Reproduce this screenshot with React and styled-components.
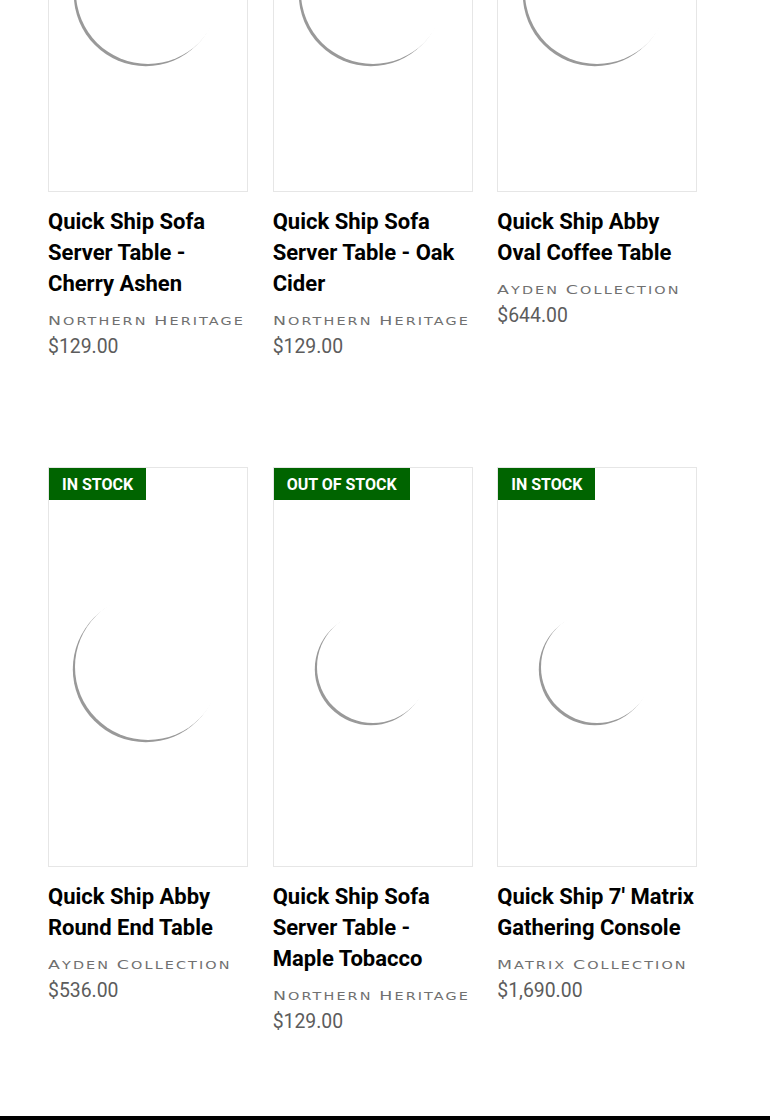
import React from 'react';
import styled, { createGlobalStyle } from 'styled-components';

const GlobalStyle = createGlobalStyle`
  html, body {
    margin: 0;
    padding: 0;
    background: #fff;
    font-family: Roboto, "Liberation Sans", sans-serif;
    overflow: hidden;
  }
`;

const Page = styled.div`
  width: 770px;
  height: 1120px;
  overflow: hidden;
  display: flex;
  flex-direction: column;
`;

const Grid = styled.div`
  display: grid;
  grid-template-columns: repeat(3, 200px);
  column-gap: 24.67px;
  row-gap: 107px;
  margin-top: -208px;
  padding: 0 0 80px 48px;
`;

const Card = styled.div`
  display: flex;
  flex-direction: column;
`;

const ImageBox = styled.div`
  position: relative;
  height: 400px;
  border: 1px solid #e6e6e6;
  box-sizing: border-box;
  display: flex;
  align-items: center;
  justify-content: center;
`;

const Spinner = styled.div`
  width: ${(p) => p.size}px;
  height: ${(p) => p.size}px;
  border-radius: 50%;
  box-shadow: -2.2px 2.2px 0.6px 0 #999;
`;

const Badge = styled.span`
  position: absolute;
  top: 0;
  left: 0;
  height: 32px;
  display: flex;
  align-items: center;
  padding: 0 13px;
  background: #006400;
  color: #fff;
  font-weight: 700;
  font-size: 16px;
  text-transform: uppercase;
`;

const Title = styled.h3`
  margin: 14px 0 0;
  font-size: 22px;
  line-height: 31px;
  font-weight: 700;
  color: #000;
`;

const Vendor = styled.div`
  margin-top: 12px;
  height: 20px;
  line-height: 20px;
  font-family: "DejaVu Sans", Verdana, sans-serif;
  font-size: 9.6px;
  letter-spacing: 1.4px;
  text-transform: uppercase;
  color: #707070;
  white-space: nowrap;
  transform: scaleX(1.5);
  transform-origin: left center;
`;

const Initial = styled.span`
  font-size: 11.6px;
`;

const Price = styled.div`
  margin-top: 3px;
  line-height: 26px;
  font-size: 19.4px;
  color: #5c5c5c;
`;

const Footer = styled.footer`
  margin-top: auto;
  height: 4px;
  background: #000;
`;

const products = [
  { title: 'Quick Ship Sofa Server Table - Cherry Ashen', vendor: 'Northern Heritage', price: '$129.00', spin: 144 },
  { title: 'Quick Ship Sofa Server Table - Oak Cider', vendor: 'Northern Heritage', price: '$129.00', spin: 144 },
  { title: 'Quick Ship Abby Oval Coffee Table', vendor: 'Ayden Collection', price: '$644.00', spin: 144 },
  { title: 'Quick Ship Abby Round End Table', vendor: 'Ayden Collection', price: '$536.00', badge: 'In stock', spin: 146 },
  { title: 'Quick Ship Sofa Server Table - Maple Tobacco', vendor: 'Northern Heritage', price: '$129.00', badge: 'Out of stock', spin: 112 },
  { title: "Quick Ship 7' Matrix Gathering Console", vendor: 'Matrix Collection', price: '$1,690.00', badge: 'In stock', spin: 112 },
];

function VendorName({ name }) {
  const words = name.split(' ');
  return (
    <Vendor>
      {words.map((w, i) => (
        <React.Fragment key={i}>
          {i > 0 && ' '}
          <Initial>{w[0]}</Initial>
          {w.slice(1)}
        </React.Fragment>
      ))}
    </Vendor>
  );
}

export default function App() {
  return (
    <Page>
      <GlobalStyle />
      <Grid>
        {products.map((p) => (
          <Card key={p.title}>
            <ImageBox>
              {p.badge && <Badge>{p.badge}</Badge>}
              <Spinner size={p.spin} />
            </ImageBox>
            <Title>{p.title}</Title>
            <VendorName name={p.vendor} />
            <Price>{p.price}</Price>
          </Card>
        ))}
      </Grid>
      <Footer />
    </Page>
  );
}
